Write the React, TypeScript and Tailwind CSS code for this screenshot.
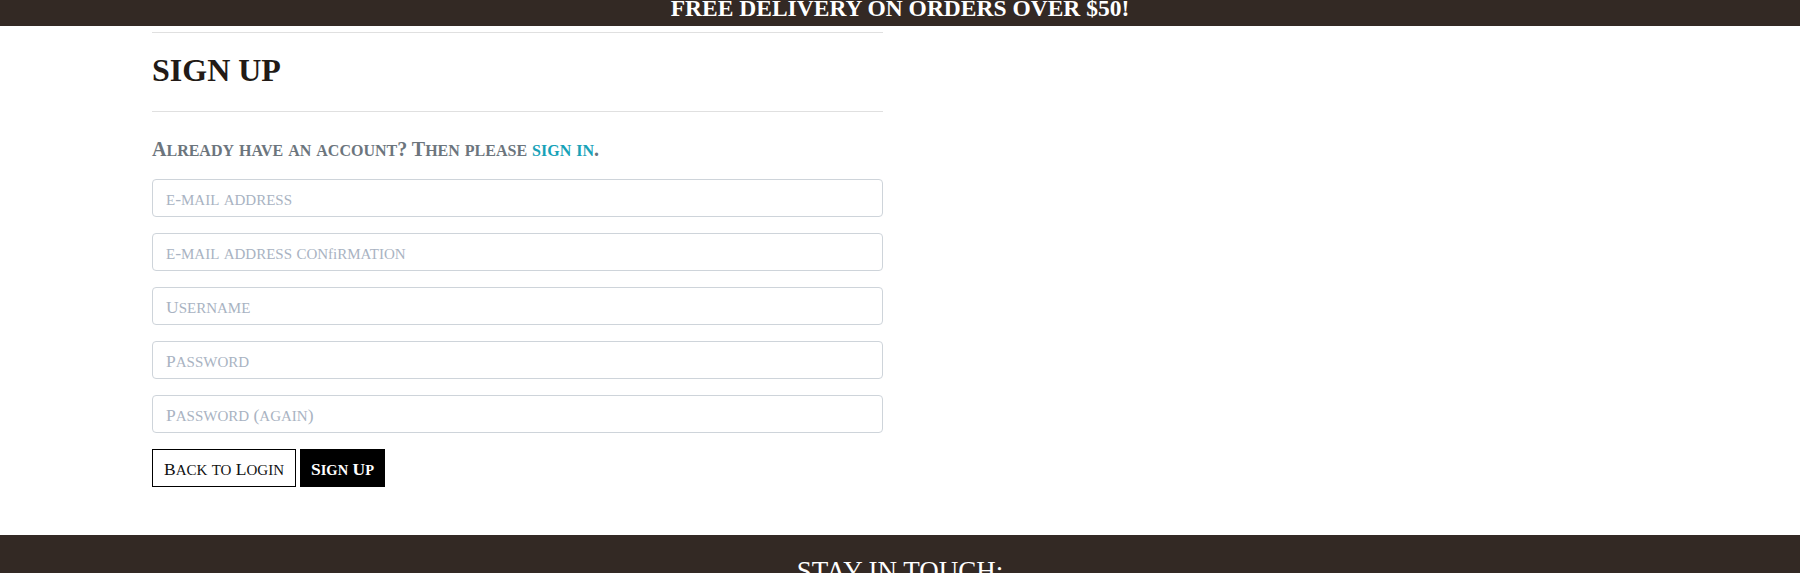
import React from "react";

function SC({ text, smallClass }: { text: string; smallClass: string }) {
  const parts = text.split(/([a-z]+)/);
  return (
    <>
      {parts.map((p, i) =>
        /^[a-z]+$/.test(p) ? (
          <span key={i} className={`uppercase leading-none ${smallClass}`}>
            {p}
          </span>
        ) : (
          <span key={i}>{p}</span>
        )
      )}
    </>
  );
}

function Field({ children, type = "text" }: { children: React.ReactNode; type?: string }) {
  return (
    <div className="relative h-[38px] w-full">
      <input
        type={type}
        aria-label="field"
        className="block h-[38px] w-full rounded-[4px] border border-[#ced4da] bg-white px-[13px] outline-none"
      />
      <span className="pointer-events-none absolute left-[14px] top-[1px] whitespace-nowrap text-[17.5px] leading-[38px] text-[#a9b3c2]">
        {children}
      </span>
    </div>
  );
}

export default function App() {
  return (
    <div className="min-h-screen bg-white font-['Liberation_Serif','Times_New_Roman',serif]">
      <div className="h-[26px] overflow-hidden bg-[#332924] text-center text-[23.5px] font-bold leading-[16px] text-white">
        FREE DELIVERY ON ORDERS OVER $50!
      </div>

      <main className="pl-[152px] pt-[6px] pb-[48px]">
        <div className="w-[731px]">
          <div className="h-px bg-[#e0e0e0]" />
          <h2 className="mt-[18px] text-[32px] font-bold leading-[38px] text-[#221a16]">SIGN UP</h2>
          <div className="mt-[22px] h-px bg-[#e0e0e0]" />
          <p className="mt-[25px] text-[20px] font-bold leading-[24px] text-[#6c757d]">
            <SC text="Already have an account? Then please " smallClass="text-[16px]" />
            <a href="#" className="text-[#17a2b8]">
              <SC text="sign in" smallClass="text-[16px]" />
            </a>
            .
          </p>

          <form className="mt-[18px] flex flex-col gap-4" onSubmit={(e) => e.preventDefault()}>
            <Field type="email">
              <SC text="e-mail address" smallClass="text-[15px]" />
            </Field>
            <Field type="email">
              <SC text="e-mail address con" smallClass="text-[15px]" />
              <span className="text-[15px] leading-none">fi</span>
              <SC text="rmation" smallClass="text-[15px]" />
            </Field>
            <Field>
              <SC text="Username" smallClass="text-[15px]" />
            </Field>
            <Field type="password">
              <SC text="Password" smallClass="text-[15px]" />
            </Field>
            <Field type="password">
              <SC text="Password (again)" smallClass="text-[15px]" />
            </Field>

            <div className="flex gap-[4px]">
              <button
                type="button"
                className="flex h-[38px] w-[144px] items-center justify-center border-[1.5px] border-black bg-white pt-[1px] text-[17.5px] text-[#111]"
              >
                <span className="leading-[36px]">
                  <SC text="Back to Login" smallClass="text-[15px]" />
                </span>
              </button>
              <button
                type="submit"
                className="flex h-[38px] w-[85px] items-center justify-center bg-black pt-[1px] text-[17.5px] font-bold text-white"
              >
                <span className="leading-[36px]">
                  <SC text="Sign Up" smallClass="text-[14.5px]" />
                </span>
              </button>
            </div>
          </form>
        </div>
      </main>

      <footer className="h-[160px] bg-[#332924] pt-[20px] text-center">
        <h3 className="text-[27px] leading-[32px] text-white">STAY IN TOUCH:</h3>
      </footer>
    </div>
  );
}
